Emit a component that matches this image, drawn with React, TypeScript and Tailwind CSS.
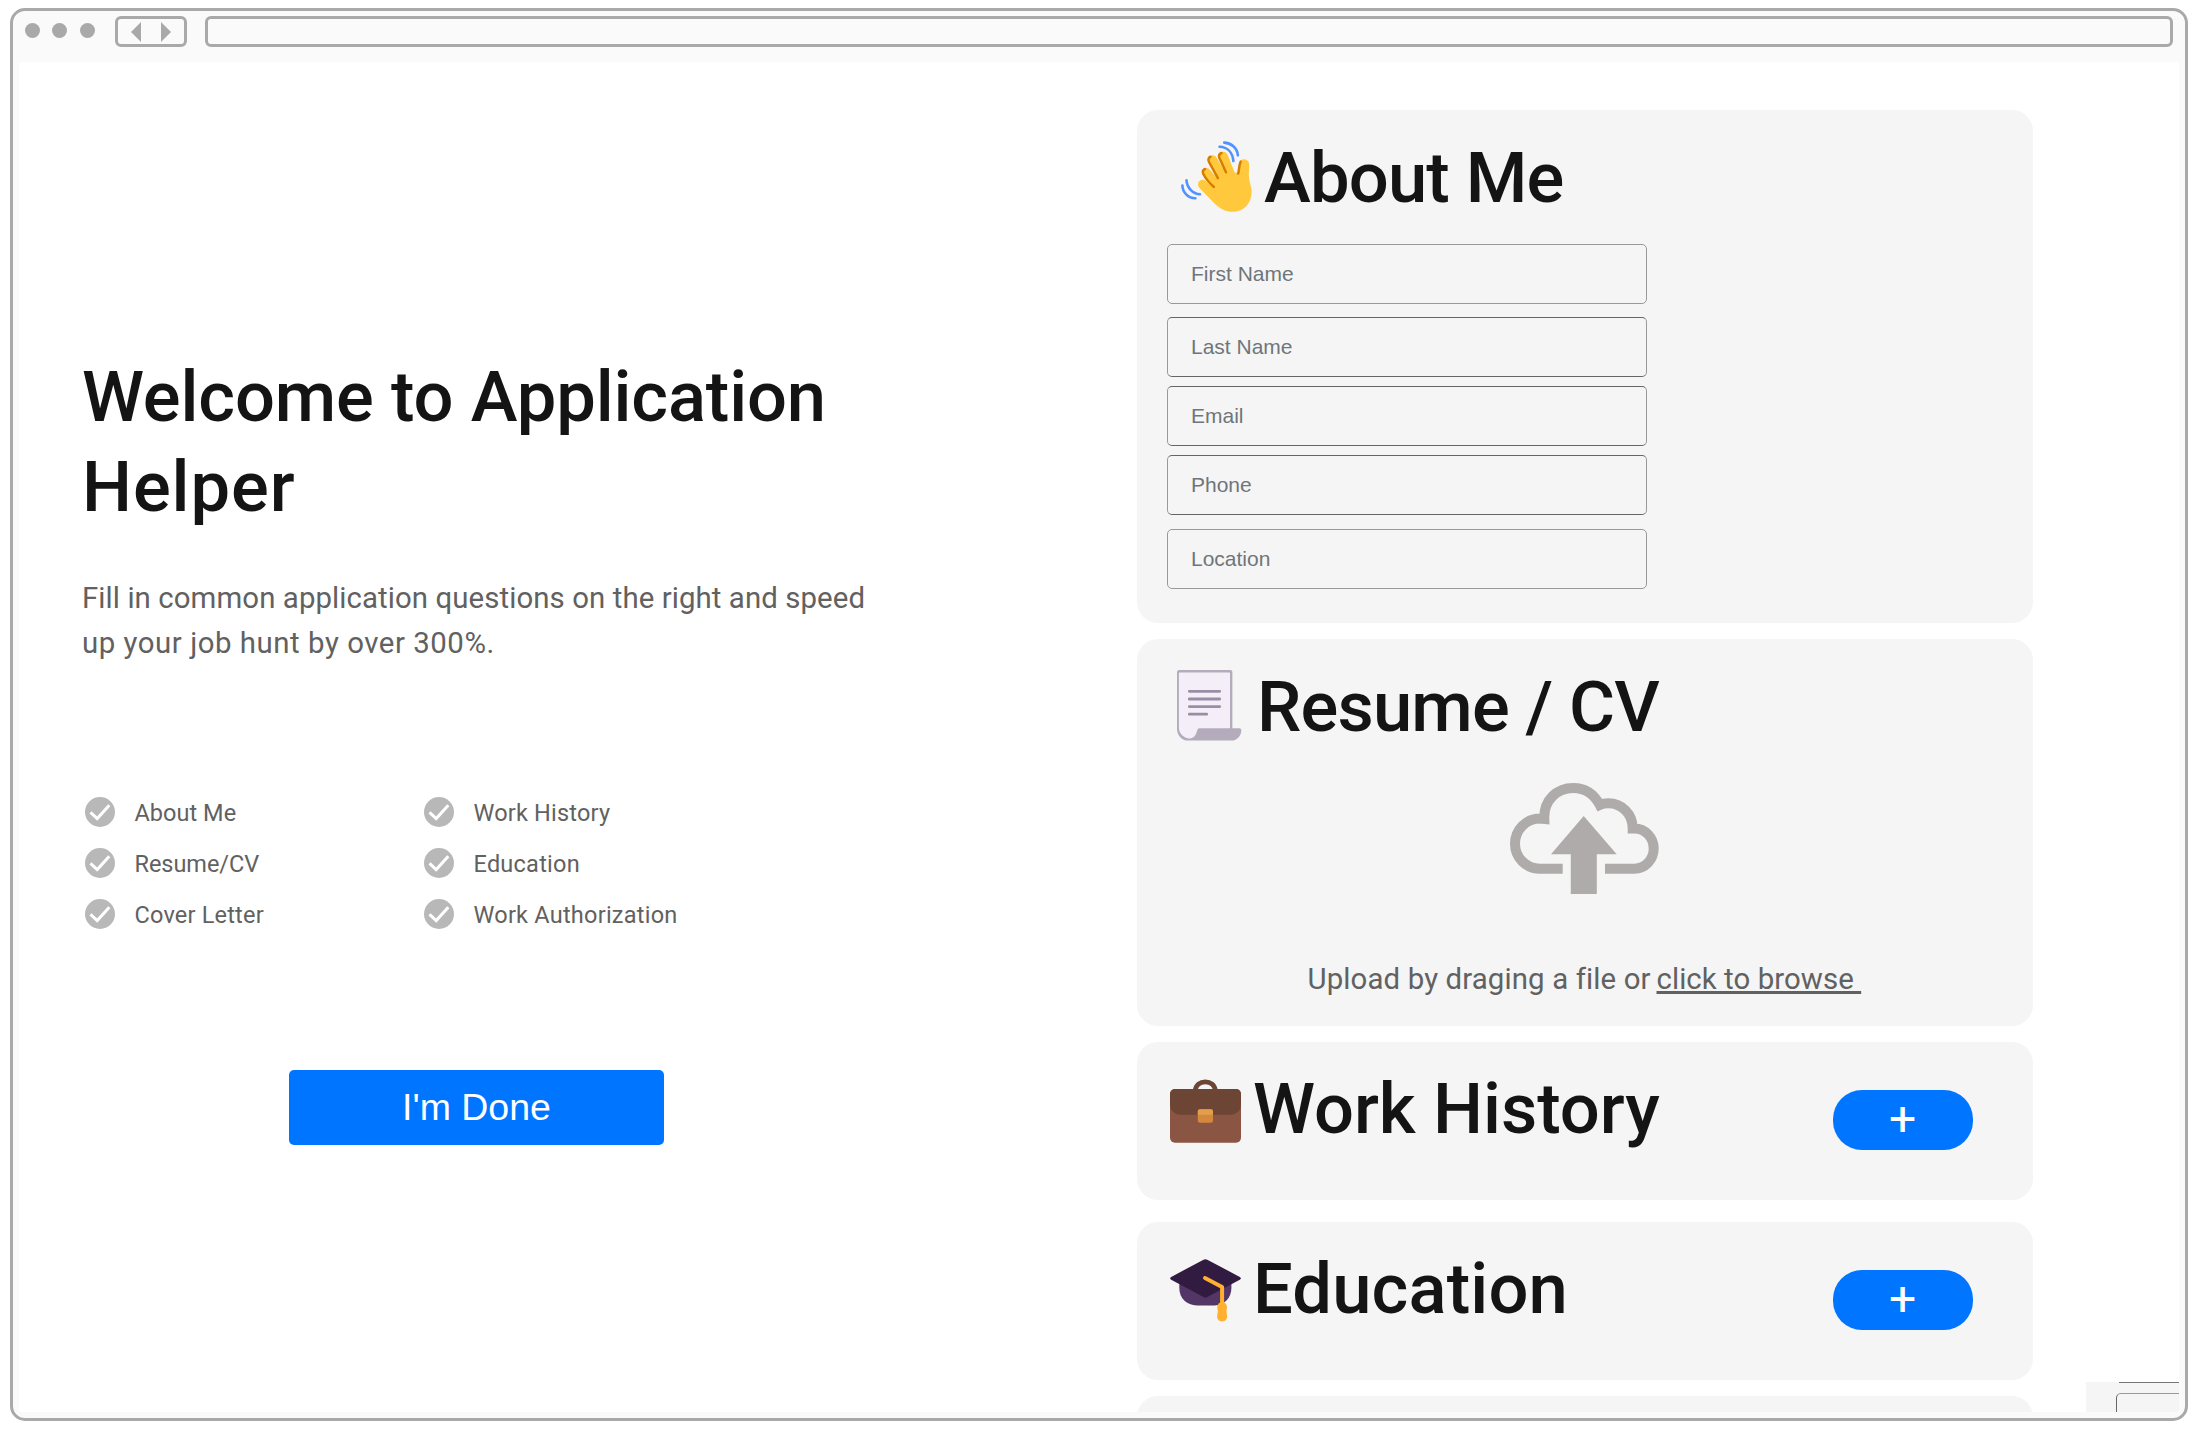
import type { ReactNode } from "react";

function WaveIcon() {
  return (
    <svg className="mt-2 h-[71px] w-[71px] shrink-0" viewBox="0 0 71 71" fill="none" strokeLinecap="round" strokeLinejoin="round">
      <g stroke="#5092ff" strokeWidth="2.6">
        <path d="M43.2 1.6C50 1.8 56.3 7 56.9 14.3" />
        <path d="M38.6 5.7C46 6 51.5 11 52.4 20" />
        <path d="M1.4 44.5C1.5 51 7 57.2 14.4 57.3" />
        <path d="M5.5 39.3C6 46.5 11.5 52.8 19 53.2" />
      </g>
      <g stroke="#ffc83d">
        <path d="M42.2 15.3L53 42" strokeWidth="9.2" />
        <path d="M31.6 19L46 44" strokeWidth="9.4" />
        <path d="M25.4 31.4L43 52" strokeWidth="8.8" />
        <path d="M21.6 43.4L40 60" strokeWidth="9.2" />
        <path d="M63.2 23.3L62.6 40" strokeWidth="10" />
      </g>
      <path
        fill="#ffc83d"
        d="M38 34L56 31.5L67.7 34C68 41 70.6 45 70.6 51C70.6 63 62 70.8 51.5 70.8C45 70.8 39.5 68 34.5 63.5L18.5 47L34 42Z"
      />
      <g stroke="#d67d00" strokeWidth="2.5">
        <path d="M40.5 12C38 13 37.7 15 38.4 17L45 31.3" />
        <path d="M29.5 15.7C27.3 17 27.1 19 28 21L36.9 37.2" />
        <path d="M24 28C21.5 29 21.4 31 22.4 33C25 38.5 29 42.5 32.9 46" />
        <path d="M59.7 20.5C57.9 24 58.3 28.5 57.2 32.5" />
      </g>
    </svg>
  );
}

function ScrollIcon() {
  return (
    <svg className="mt-2 h-[71px] w-[65px] shrink-0" viewBox="0 0 65 71">
      <path
        fill="#b4acbc"
        d="M2 0H53.4a2 2 0 0 1 2 2V58.2H62.5a1.8 1.8 0 0 1 1.8 1.8C64.3 66 60 70.6 54.6 70.6H11C5 70.6 0 66 0 58.5V2a2 2 0 0 1 2-2Z"
      />
      <path
        fill="#f3eef8"
        d="M2.6 2.4H52.2a.8.8 0 0 1 .8.8V58.2H22.5C21.2 58.2 20.6 59 20.3 60.3C19.3 64.5 17 68.5 12.5 68.5C8 68.5 1.9 64 1.9 58V3.2a.8.8 0 0 1 .7-.8Z"
      />
      <path stroke="#998ea4" strokeWidth="2.8" strokeLinecap="round" d="M12.3 21.3H42.7M12.3 29H42.7M12.3 36.6H42.7M12.3 44.2H29.7" />
    </svg>
  );
}

function BriefcaseIcon() {
  return (
    <svg className="mt-[15px] h-[64px] w-[71px] shrink-0" viewBox="0 0 71 64">
      <path fill="none" stroke="#6d4534" strokeWidth="4.8" d="M25.3 11.5C25.8 6 30 2.8 35.3 2.8S44.7 6 45.3 11.5" />
      <rect y="10" width="71" height="53.7" rx="5" fill="#8b5543" />
      <path fill="#6d4534" d="M5 10H66A5 5 0 0 1 71 15V25.7A10 10 0 0 1 61 35.7H10A10 10 0 0 1 0 25.7V15A5 5 0 0 1 5 10Z" />
      <rect x="27.8" y="30.3" width="15.2" height="13.4" rx="2.3" fill="#d3883e" />
      <path fill="#e39d4d" d="M27.8 35.7V32.6A2.3 2.3 0 0 1 30.1 30.3H40.7A2.3 2.3 0 0 1 43 32.6V35.7Z" />
    </svg>
  );
}

function GraduationIcon() {
  return (
    <svg className="mt-[15px] h-[64px] w-[71px] shrink-0" viewBox="0 0 71 64">
      <path fill="#533566" d="M9.3 22H61.4V29C61.4 39 54 46.4 44.5 46.4H27C16.5 46.4 9.3 39 9.3 29Z" />
      <path
        fill="#321b41"
        d="M33.5.7Q35.4-.4 37.3.7L69.8 17.9Q72 19.3 69.8 20.8L37.3 38Q35.4 39.2 33.5 38L1.2 20.8Q-1 19.3 1.2 17.9Z"
      />
      <path fill="none" stroke="#ffb02e" strokeWidth="4" strokeLinecap="round" strokeLinejoin="round" d="M35 19L52.1 28V45" />
      <path
        fill="#ffb02e"
        d="M52.1 43C55 43 57 45.5 57 48.3C57 50 56.3 51 56.5 52.5L57.1 57.5C57.1 60.5 55 62.4 52.1 62.4S47.1 60.5 47.1 57.5L47.8 52.5C48 51 47.3 50 47.3 48.3C47.3 45.5 49.3 43 52.1 43Z"
      />
    </svg>
  );
}

function CloudUploadIcon() {
  return (
    <svg className="mt-[31px] ml-[373px] block h-[111px] w-[149px]" viewBox="0 0 149 111">
      <path
        fill="none"
        stroke="#afabaa"
        strokeWidth="10"
        d="M52.7 85.7H30C16 85.7 5 74.5 5 60.7S16 35.6 30 35.6L34.3 36C33.5 17 47 5 63.3 5C74.5 5 84 11 89.8 22C92.5 20.8 95 20.3 98.3 20.3C112 20.3 122.7 31 122.7 45.4H124.3C135.2 45.4 143.7 54.5 143.7 65.6S135.2 85.7 124.3 85.7H95"
      />
      <path fill="#afabaa" d="M73.7 33L106.7 71.3H86.8V111H60.8V71.3H41Z" />
    </svg>
  );
}

function CheckItem({ label, tracking }: { label: string; tracking: string }) {
  return (
    <li className="flex h-[30px] items-center gap-[19.5px]">
      <svg className="h-[30px] w-[30px] shrink-0" viewBox="0 0 30 30">
        <circle cx="15" cy="15" r="15" fill="#b8b8b8" />
        <path d="M5.5 15.3L12.2 21.6L24.3 8.3" fill="none" stroke="#fff" strokeWidth="3" />
      </svg>
      <span className={`pt-0.5 text-[23.5px] leading-[30px] whitespace-nowrap text-[#616161] ${tracking}`}>{label}</span>
    </li>
  );
}

function Title({ children, className }: { children: ReactNode; className: string }) {
  return <h2 className={`text-[70.5px] leading-[90px] font-medium whitespace-nowrap text-[#141414] ${className}`}>{children}</h2>;
}

function Field({ placeholder, className }: { placeholder: string; className: string }) {
  return (
    <div
      className={`flex h-[60px] w-[480px] items-center rounded-[5px] border border-x-[#999] pl-[23.5px] font-['Liberation_Sans',sans-serif] text-[21px] text-[#6f757a] ${className}`}
    >
      {placeholder}
    </div>
  );
}

function AddCard({ icon, title, titleClass, className }: { icon: ReactNode; title: string; titleClass: string; className: string }) {
  return (
    <section className={`flex h-[158px] shrink-0 items-start rounded-[21px] bg-[#f5f5f5] pt-[22.5px] pr-[60px] pl-[33px] ${className}`}>
      {icon}
      <Title className={`ml-[12.5px] ${titleClass}`}>{title}</Title>
      <button className="mt-[25.5px] ml-auto flex h-[60px] w-[140px] items-center justify-center rounded-[29px] bg-[#0075ff] pb-[3px] text-[48px] leading-[57px] text-white">
        +
      </button>
    </section>
  );
}

export default function App() {
  return (
    <div className="h-[1429px] w-[2193px] overflow-hidden bg-white pt-2 pl-2.5 font-[Roboto,sans-serif]">
      <div className="flex h-[1413px] w-[2178px] flex-col rounded-[15px] border-[3px] border-[#a9a9a9] bg-[#fafafa]">
        <header className="flex h-[51px] shrink-0 items-start pt-[5px] pl-3">
          <div className="mt-[7px] flex">
            <span className="h-[15px] w-[15px] rounded-full bg-[#a9a9a9]" />
            <span className="ml-3 h-[15px] w-[15px] rounded-full bg-[#a9a9a9]" />
            <span className="ml-[13px] h-[15px] w-[15px] rounded-full bg-[#a9a9a9]" />
          </div>
          <div className="ml-5 flex h-[31px] w-[72px] items-center justify-center gap-5 rounded-md border-[3px] border-[#a9a9a9]">
            <svg className="h-5 w-2.5" viewBox="0 0 10 20">
              <path d="M10 0V20L0 10Z" fill="#a9a9a9" />
            </svg>
            <svg className="h-5 w-2.5" viewBox="0 0 10 20">
              <path d="M0 0V20L10 10Z" fill="#a9a9a9" />
            </svg>
          </div>
          <div className="ml-[18px] h-[31px] w-[1968px] rounded-md border-[3px] border-[#a9a9a9]" />
        </header>

        <div className="relative mx-1.5 mb-1.5 flex min-h-0 flex-1 overflow-hidden rounded-[3px] bg-white">
          <main className="w-[1117.5px] shrink-0 pt-[290px] pl-16">
            <h1 className="text-[70.5px] leading-[90px] font-medium whitespace-nowrap text-[#141414]">
              <span className="-ml-px block tracking-[-0.15px]">Welcome to Application</span>
              <span className="-ml-px block tracking-[0.9px]">Helper</span>
            </h1>
            <p className="mt-11 -ml-px text-[29.4px] leading-[45px] whitespace-nowrap text-[#616161]">
              <span className="block tracking-[0.08px]">Fill in common application questions on the right and speed</span>
              <span className="block tracking-[0.53px]">up your job hunt by over 300%.</span>
            </p>
            <ul className="mt-[131px] ml-0.5 grid grid-cols-[339px_auto] gap-y-[21px]">
              <CheckItem label="About Me" tracking="tracking-[0.03px]" />
              <CheckItem label="Work History" tracking="tracking-[0.2px]" />
              <CheckItem label="Resume/CV" tracking="tracking-[-0.05px]" />
              <CheckItem label="Education" tracking="tracking-[0.24px]" />
              <CheckItem label="Cover Letter" tracking="tracking-[0.2px]" />
              <CheckItem label="Work Authorization" tracking="tracking-[0.24px]" />
            </ul>
            <button className="mt-[141px] ml-[206px] flex h-[75px] w-[375px] items-center justify-center rounded-[5px] bg-[#0075ff] font-['Liberation_Sans',sans-serif] text-[37.5px] text-white">
              I'm Done
            </button>
          </main>

          <aside className="flex w-[896px] shrink-0 flex-col pt-12">
            <section className="h-[513px] shrink-0 rounded-[21px] bg-[#f5f5f5] pt-[23px] pl-[30px]">
              <div className="flex h-[90px] pl-[14px]">
                <WaveIcon />
                <Title className="ml-[12.5px] tracking-[-0.82px]">About Me</Title>
              </div>
              <Field placeholder="First Name" className="mt-[21px] border-y-[#999]" />
              <Field placeholder="Last Name" className="mt-[13px] border-y-[#666]" />
              <Field placeholder="Email" className="mt-[9px] border-y-[#666]" />
              <Field placeholder="Phone" className="mt-[9px] border-y-[#666]" />
              <Field placeholder="Location" className="mt-[14px] border-y-[#999]" />
            </section>

            <section className="mt-4 h-[386.5px] shrink-0 rounded-[21px] bg-[#f5f5f5] pt-[23px]">
              <div className="flex h-[90px] pl-10">
                <ScrollIcon />
                <Title className="ml-[15.5px] tracking-[-0.82px]">Resume / CV</Title>
              </div>
              <CloudUploadIcon />
              <p className="mt-[63px] flex pl-[171px] text-[29.4px] leading-[45px] whitespace-pre text-[#616161]">
                <span className="w-[349px] tracking-[0.12px]">Upload by draging a file or </span>
                <span className="tracking-[0.06px] underline decoration-[3px] underline-offset-2 [text-decoration-skip-ink:none]">click to browse </span>
              </p>
            </section>

            <AddCard icon={<BriefcaseIcon />} title="Work History" titleClass="tracking-[-0.04px]" className="mt-4" />
            <AddCard icon={<GraduationIcon />} title="Education" titleClass="tracking-[0.15px]" className="mt-[22px]" />
            <section className="mt-4 h-[158px] shrink-0 rounded-[21px] bg-[#f5f5f5]" />
          </aside>

          <div className="absolute right-0 bottom-0 h-[30px] w-[93px] overflow-hidden bg-[#f5f5f5] pl-[30px]">
            <div className="ml-[3px] h-px bg-[#777]" />
            <div className="mt-[10px] h-[60px] w-[480px] rounded-[5px] border border-[#666] border-t-[#999]" />
          </div>
        </div>
      </div>
    </div>
  );
}
